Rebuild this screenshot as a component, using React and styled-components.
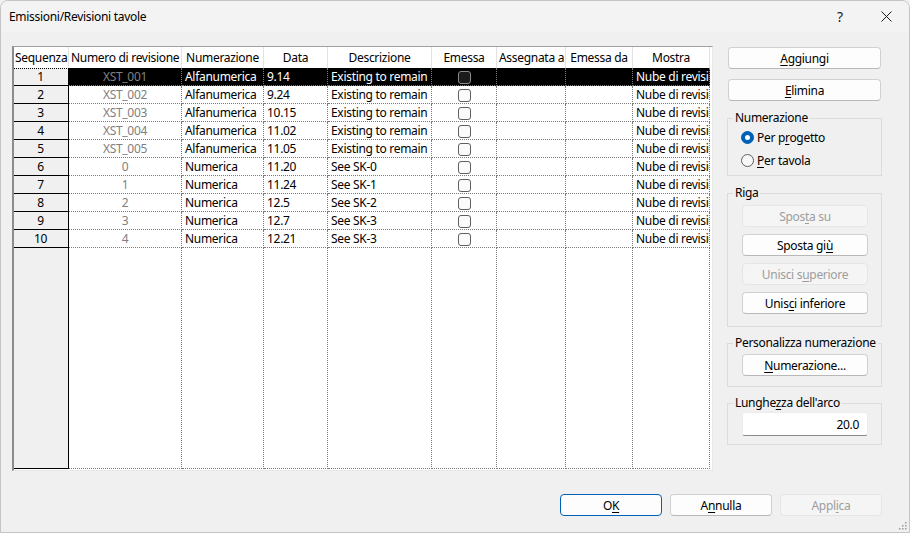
import React from "react";
import styled, { createGlobalStyle } from "styled-components";

const Global = createGlobalStyle`
  * { box-sizing: border-box; }
  html, body { margin: 0; padding: 0; background: #f0f0f0; }
  body { font-family: "Noto Sans", "Open Sans", sans-serif; font-size: 12px; letter-spacing: -0.3px; color: #000; }
`;

const Window = styled.div`
  width: 910px;
  height: 533px;
  display: flex;
  flex-direction: column;
  background: #f0f0f0;
  border: 1px solid #c4c4c4;
  border-radius: 8px 8px 0 0;
  overflow: hidden;
  position: relative;
`;

const TitleBar = styled.div`
  height: 31px;
  flex: none;
  display: flex;
  align-items: center;
  background: #f3f3f3;
  padding-left: 8px;
`;

const Title = styled.div`
  flex: 1;
  font-size: 12px;
`;

const TitleButton = styled.div`
  width: 46px;
  height: 30px;
  display: flex;
  align-items: center;
  justify-content: center;
  font-size: 14px;
  color: #1a1a1a;
`;

const Body = styled.div`
  flex: 1;
  display: flex;
  flex-direction: column;
  padding: 14px 27px 0 11px;
`;

const Main = styled.div`
  display: flex;
  gap: 14px;
  height: 425px;
`;

const GridFrame = styled.div`
  width: 701px;
  height: 425px;
  background: #fff;
  border-top: 1px solid #a0a0a0;
  border-left: 2px solid #8c8c8c;
  border-right: 1px solid #e8e8e8;
  border-bottom: 1px solid #e8e8e8;
  overflow: hidden;
`;

const Table = styled.table`
  border-collapse: separate;
  border-spacing: 0;
  table-layout: fixed;
  width: 697px;
  margin-left: -1px;
`;

const HeadCell = styled.th`
  height: 21px;
  padding: 0 2px 1px;
  font-weight: normal;
  text-align: center;
  white-space: nowrap;
  overflow: hidden;
  background: #fff;
  border-right: 1px solid #e3e3e3;
`;

const RowHead = styled.td`
  height: ${(p) => (p.$filler ? "221px" : "18px")};
  padding: 0;
  text-align: center;
  vertical-align: ${(p) => (p.$filler ? "top" : "middle")};
  background: #f0f0f0;
  border-right: 1px solid #000;
  border-bottom: 1px solid #000;
  outline: ${(p) => (p.$focus ? "1px dotted #000" : "none")};
  outline-offset: -1px;
  line-height: 16px;
`;

const Cell = styled.td`
  height: ${(p) => (p.$filler ? "221px" : "18px")};
  padding: 0 3px;
  line-height: 16px;
  white-space: nowrap;
  overflow: hidden;
  text-align: ${(p) => p.$align || "left"};
  color: ${(p) => (p.$muted ? "#808080" : p.$sel ? "#fff" : "#000")};
  background: ${(p) => (p.$sel ? "#000" : "#fff")};
  border-right: 1px dotted #7a7a7a;
  border-bottom: 1px dotted #7a7a7a;
`;

const Check = styled.span`
  display: inline-block;
  width: 13px;
  height: 13px;
  vertical-align: middle;
  border-radius: 3px;
  border: 1px solid ${(p) => (p.$sel ? "#8a8a8a" : "#5f5f5f")};
  background: ${(p) => (p.$sel ? "#1b1b1b" : "#fbfbfb")};
`;

const Side = styled.div`
  width: 155px;
  display: flex;
  flex-direction: column;
  padding-top: 1px;
`;

const Button = styled.button`
  font-family: inherit;
  font-size: 12px;
  letter-spacing: -0.3px;
  height: ${(p) => p.$h || 22}px;
  width: ${(p) => (p.$w ? p.$w + "px" : "100%")};
  margin: 0;
  padding: 0;
  border-radius: 4px;
  color: ${(p) => (p.disabled ? "#9d9d9d" : "#000")};
  background: ${(p) => (p.disabled ? "#f5f5f5" : "#fdfdfd")};
  border: 1px solid ${(p) => (p.$primary ? "#005fb8" : p.disabled ? "#e5e5e5" : "#d0d0d0")};
  border-bottom-color: ${(p) => (p.$primary ? "#005fb8" : p.disabled ? "#e5e5e5" : "#b8b8b8")};
  flex: none;
`;

const SideButtons = styled.div`
  display: flex;
  flex-direction: column;
  gap: 10px;
  padding: 0 1px;
`;

const Group = styled.fieldset`
  margin: ${(p) => p.$mt}px 0 0 0;
  padding: 0;
  border: 1px solid #dcdcdc;
  min-width: 0;
`;

const Legend = styled.legend`
  margin-left: 5px;
  padding: 0 2px;
  line-height: 16px;
  font-size: 12px;
  white-space: nowrap;
`;

const GroupBody = styled.div`
  display: flex;
  flex-direction: column;
  gap: ${(p) => p.$gap || 0}px;
  padding: ${(p) => p.$pad};
`;

const RadioRow = styled.label`
  display: flex;
  align-items: center;
  gap: 3px;
  height: 16px;
`;

const RadioDot = styled.span`
  width: 13px;
  height: 13px;
  border-radius: 50%;
  flex: none;
  background: ${(p) => (p.$on ? "#005fb8" : "#f7f7f7")};
  border: 1px solid ${(p) => (p.$on ? "#005fb8" : "#5f5f5f")};
  display: flex;
  align-items: center;
  justify-content: center;
  &::after {
    content: "";
    width: 5px;
    height: 5px;
    border-radius: 50%;
    background: #fff;
    display: ${(p) => (p.$on ? "block" : "none")};
  }
`;

const Input = styled.div`
  width: 126px;
  height: 24px;
  background: #fff;
  border: 1px solid #ececec;
  border-bottom: 1px solid #8a8a8a;
  border-radius: 3px;
  display: flex;
  align-items: center;
  justify-content: flex-end;
  padding-right: 8px;
`;

const Footer = styled.div`
  display: flex;
  justify-content: flex-end;
  gap: 8px;
  margin-top: 23px;
`;

const U = styled.span`
  text-decoration: underline;
  text-underline-offset: 2px;
`;

const Grip = styled.svg`
  position: absolute;
  right: 2px;
  bottom: 2px;
`;

const cols = [56, 113, 82, 64, 104, 65, 69, 67, 77];
const heads = ["Sequenza", "Numero di revisione", "Numerazione", "Data", "Descrizione", "Emessa", "Assegnata a", "Emessa da", "Mostra"];

const rows = [
  ["XST_001", "Alfanumerica", "9.14", "Existing to remain"],
  ["XST_002", "Alfanumerica", "9.24", "Existing to remain"],
  ["XST_003", "Alfanumerica", "10.15", "Existing to remain"],
  ["XST_004", "Alfanumerica", "11.02", "Existing to remain"],
  ["XST_005", "Alfanumerica", "11.05", "Existing to remain"],
  ["0", "Numerica", "11.20", "See SK-0"],
  ["1", "Numerica", "11.24", "See SK-1"],
  ["2", "Numerica", "12.5", "See SK-2"],
  ["3", "Numerica", "12.7", "See SK-3"],
  ["4", "Numerica", "12.21", "See SK-3"],
];

export default function App() {
  return (
    <>
      <Global />
      <Window>
        <TitleBar>
          <Title>Emissioni/Revisioni tavole</Title>
          <TitleButton>?</TitleButton>
          <TitleButton>
            <svg width="11" height="11" viewBox="0 0 11 11">
              <path d="M0.5 0.5 L10.5 10.5 M10.5 0.5 L0.5 10.5" stroke="#1a1a1a" strokeWidth="1" />
            </svg>
          </TitleButton>
        </TitleBar>
        <Body>
          <Main>
            <GridFrame>
              <Table>
                <colgroup>
                  {cols.map((w, i) => (
                    <col key={i} style={{ width: w }} />
                  ))}
                </colgroup>
                <thead>
                  <tr>
                    {heads.map((h) => (
                      <HeadCell key={h}>{h}</HeadCell>
                    ))}
                  </tr>
                </thead>
                <tbody>
                  {rows.map((r, i) => {
                    const sel = i === 0;
                    return (
                      <tr key={i}>
                        <RowHead $focus={sel}>{i + 1}</RowHead>
                        <Cell $align="center" $muted $sel={sel}>{r[0]}</Cell>
                        <Cell $sel={sel}>{r[1]}</Cell>
                        <Cell $sel={sel}>{r[2]}</Cell>
                        <Cell $sel={sel}>{r[3]}</Cell>
                        <Cell $align="center" $sel={sel}>
                          <Check $sel={sel} />
                        </Cell>
                        <Cell $sel={sel} />
                        <Cell $sel={sel} />
                        <Cell $sel={sel}>Nube di revisione</Cell>
                      </tr>
                    );
                  })}
                  <tr>
                    <RowHead $filler />
                    {cols.slice(1).map((_, i) => (
                      <Cell key={i} $filler />
                    ))}
                  </tr>
                </tbody>
              </Table>
            </GridFrame>
            <Side>
              <SideButtons>
                <Button><U>A</U>ggiungi</Button>
                <Button><U>E</U>limina</Button>
              </SideButtons>
              <Group $mt={9}>
                <Legend>Numerazione</Legend>
                <GroupBody $pad="3px 0 7px 13px" $gap={7}>
                  <RadioRow><RadioDot $on /><span>Per p<U>r</U>ogetto</span></RadioRow>
                  <RadioRow><RadioDot /><span><U>P</U>er tavola</span></RadioRow>
                </GroupBody>
              </Group>
              <Group $mt={9}>
                <Legend>Riga</Legend>
                <GroupBody $pad="4px 0 12px 14px" $gap={7}>
                  <Button $w={126} disabled>Spos<U>t</U>a su</Button>
                  <Button $w={126}>Sposta gi<U>ù</U></Button>
                  <Button $w={126} disabled>Unisci s<U>u</U>periore</Button>
                  <Button $w={126}>Unis<U>c</U>i inferiore</Button>
                </GroupBody>
              </Group>
              <Group $mt={8}>
                <Legend>Personalizza numerazione</Legend>
                <GroupBody $pad="3px 0 10px 14px">
                  <Button $w={126}><U>N</U>umerazione...</Button>
                </GroupBody>
              </Group>
              <Group $mt={8}>
                <Legend>Lunghe<U>z</U>za dell'arco</Legend>
                <GroupBody $pad="1px 0 8px 14px">
                  <Input>20.0</Input>
                </GroupBody>
              </Group>
            </Side>
          </Main>
          <Footer>
            <Button $w={102} $primary>O<U>K</U></Button>
            <Button $w={102}>A<U>n</U>nulla</Button>
            <Button $w={102} disabled>Appl<U>i</U>ca</Button>
          </Footer>
        </Body>
        <Grip width="10" height="10" viewBox="0 0 10 10">
          {[[8, 2], [8, 5], [5, 5], [8, 8], [5, 8], [2, 8]].map(([x, y], i) => (
            <rect key={i} x={x} y={y} width="1.5" height="1.5" fill="#9a9a9a" />
          ))}
        </Grip>
      </Window>
    </>
  );
}
